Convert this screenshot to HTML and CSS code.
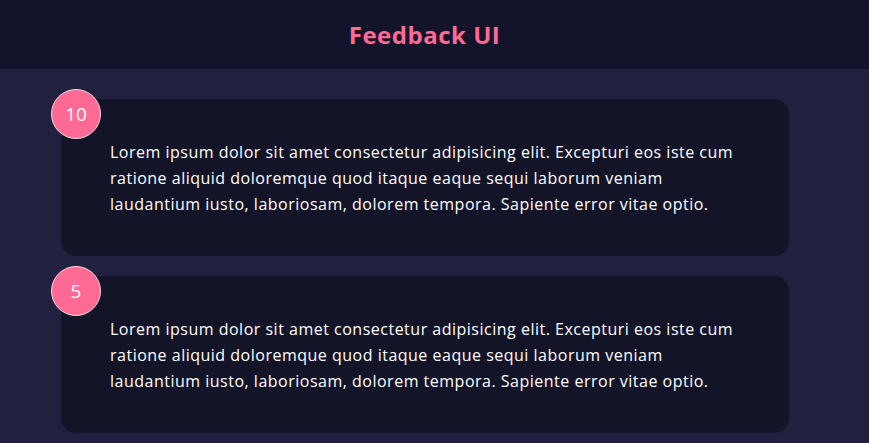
FILE: index.html
```html
<!DOCTYPE html>
<html lang="en">
<head>
<meta charset="utf-8">
<title>Feedback UI</title>
<link rel="stylesheet" href="styles.css">
</head>
<body>
<header class="header">
  <h2 class="title">Feedback UI</h2>
</header>
<main class="container">
  <div class="card">
    <div class="num">10</div>
    <p class="text">Lorem ipsum dolor sit amet consectetur adipisicing elit. Excepturi eos iste cum ratione aliquid doloremque quod itaque eaque sequi laborum veniam laudantium iusto, laboriosam, dolorem tempora. Sapiente error vitae optio.</p>
  </div>
  <div class="card">
    <div class="num">5</div>
    <p class="text">Lorem ipsum dolor sit amet consectetur adipisicing elit. Excepturi eos iste cum ratione aliquid doloremque quod itaque eaque sequi laborum veniam laudantium iusto, laboriosam, dolorem tempora. Sapiente error vitae optio.</p>
  </div>
</main>
</body>
</html>
```
FILE: styles.css
```css
* { box-sizing: border-box; }
html, body { margin: 0; padding: 0; }
body {
  background: #22203f;
  color: #fff;
  font-family: "Open Sans", "Noto Sans", sans-serif;
  height: 443px;
  overflow: hidden;
}
.header {
  background: #13132a;
  height: 69px;
  padding-right: 20px;
  display: flex;
  align-items: center;
  justify-content: center;
}
.title {
  margin: 0;
  color: #ff6a95;
  font-size: 24px;
  font-weight: 700;
  letter-spacing: 0.5px;
}
.container {
  padding: 30px 0 0 61px;
  display: flex;
  flex-direction: column;
  gap: 20px;
}
.card {
  position: relative;
  width: 728px;
  height: 157px;
  background: #141428;
  border-radius: 15px;
  padding: 40px 50px 0 49px;
}
.num {
  position: absolute;
  top: -10px;
  left: -10px;
  width: 50px;
  height: 50px;
  border-radius: 50%;
  background: #ff6a95;
  border: 1px solid #f3dbe2;
  display: flex;
  align-items: center;
  justify-content: center;
  font-size: 19px;
  color: #fff;
}
.text {
  margin: 0;
  font-size: 16px;
  line-height: 26px;
  letter-spacing: 0.5px;
}
```
